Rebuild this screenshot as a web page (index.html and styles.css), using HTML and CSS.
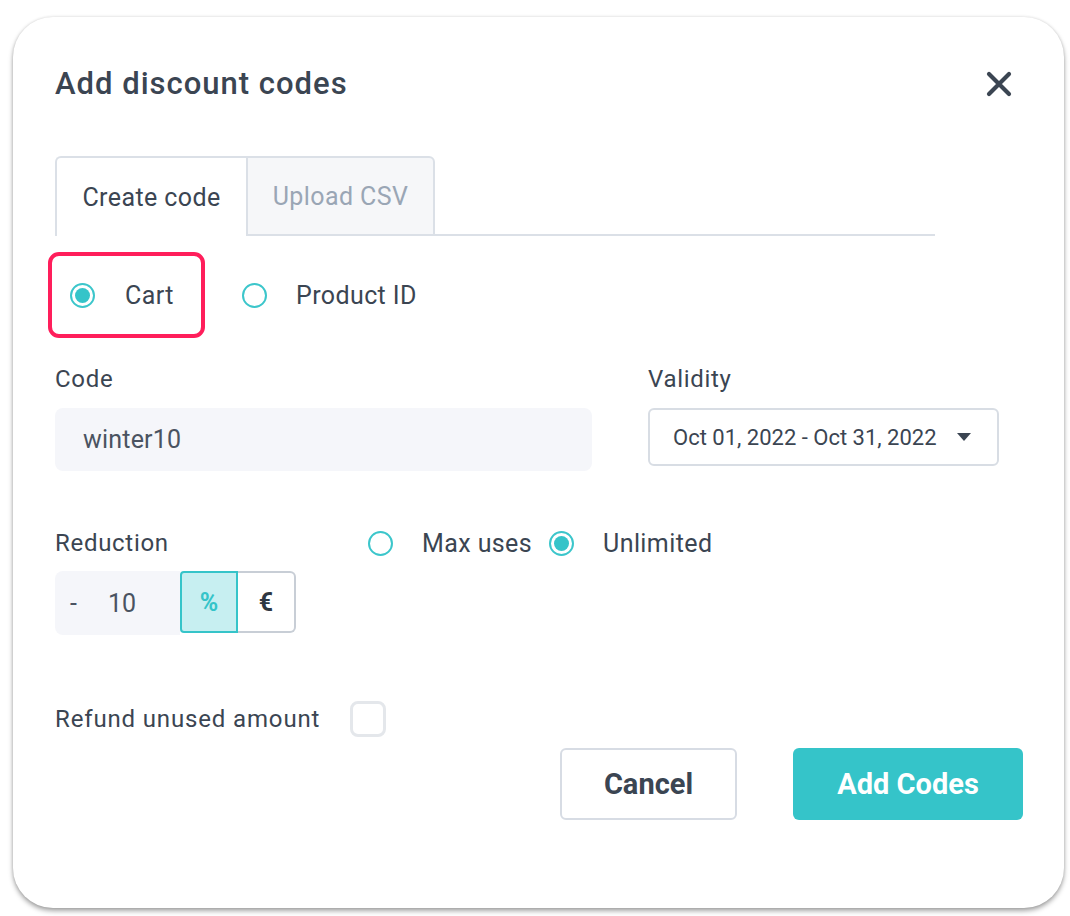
FILE: index.html
```html
<!DOCTYPE html>
<html>
<head>
<meta charset="utf-8">
<link rel="stylesheet" href="styles.css">
</head>
<body>
<div class="card">
  <div class="header">
    <h1 class="title">Add discount codes</h1>
    <svg class="close" width="26" height="26" viewBox="0 0 26 26"><path d="M3 3 L23 23 M23 3 L3 23" stroke="#3b4552" stroke-width="4.2" stroke-linecap="round"/></svg>
  </div>
  <div class="tabs">
    <div class="tab active">Create code</div>
    <div class="tab inactive">Upload CSV</div>
    <div class="tab-rest"></div>
  </div>
  <div class="type-row">
    <label class="radio highlight"><span class="dot on"></span><span>Cart</span></label>
    <label class="radio"><span class="dot"></span><span>Product ID</span></label>
  </div>
  <div class="fields">
    <div class="field">
      <div class="label">Code</div>
      <div class="input code-input">winter10</div>
    </div>
    <div class="field">
      <div class="label">Validity</div>
      <div class="select"><span>Oct 01, 2022 - Oct 31, 2022</span><svg width="14" height="8" viewBox="0 0 14 8"><path d="M0 0 H14 L7 8 Z" fill="#3b4552"/></svg></div>
    </div>
  </div>
  <div class="reduction-row">
    <div class="label red-label">Reduction</div>
    <label class="radio small"><span class="dot"></span><span>Max uses</span></label>
    <label class="radio small"><span class="dot on"></span><span>Unlimited</span></label>
  </div>
  <div class="amount">
    <div class="amount-input"><span class="minus">-</span><span>10</span></div>
    <div class="unit unit-on">%</div>
    <div class="unit unit-off">€</div>
  </div>
  <div class="refund-row">
    <span>Refund unused amount</span>
    <span class="checkbox"></span>
  </div>
  <div class="actions">
    <button class="btn cancel">Cancel</button>
    <button class="btn primary">Add Codes</button>
  </div>
</div>
</body>
</html>
```
FILE: styles.css
```css
* { box-sizing: border-box; }
html, body { margin: 0; padding: 0; background: #ffffff; }
body {
  font-family: Roboto, "Liberation Sans", sans-serif;
  color: #3b4552;
  width: 1070px;
  height: 916px;
  overflow: hidden;
}
.card {
  margin: 17px 0 0 13px;
  width: 1051px;
  height: 891px;
  background: #fff;
  border-radius: 40px;
  box-shadow: 0 3px 5px rgba(0,0,0,0.35), 0 0 3px rgba(0,0,0,0.12);
  padding: 50px 41px 0 42px;
}
.header {
  display: flex;
  align-items: center;
  justify-content: space-between;
  height: 34px;
  padding-right: 11px;
}
.title {
  margin: 0;
  font-size: 31px;
  font-weight: 500;
  line-height: 34px;
  color: #3b4552;
  letter-spacing: 1px;
}
.close { display: block; }
.tabs {
  display: flex;
  margin-top: 55px;
  height: 80px;
  width: 880px;
}
.tab {
  display: flex;
  align-items: center;
  justify-content: center;
  font-size: 25px;
  letter-spacing: 0.4px;
  border: 2px solid #dbe0e7;
}
.tab.active {
  width: 191px;
  border-bottom: none;
  border-right: none;
  border-radius: 6px 0 0 0;
  color: #3b4552;
  background: #fff;
}
.tab.inactive {
  width: 189px;
  background: #f6f7f9;
  color: #9aa6b5;
  border-radius: 0 6px 0 0;
}
.tab-rest {
  flex: 1;
  border-bottom: 2px solid #dbe0e7;
}
.type-row {
  display: flex;
  align-items: center;
  margin-top: 16px;
  margin-left: -7px;
  gap: 37px;
}
.radio {
  display: flex;
  align-items: center;
  gap: 29px;
  font-size: 25px;
  letter-spacing: 0.4px;
  color: #3b4552;
}
.radio.highlight {
  border: 4px solid #ff1e5b;
  border-radius: 11px;
  height: 86px;
  width: 157px;
  padding: 0 0 0 18px;
  gap: 30px;
}
.dot {
  width: 25px;
  height: 25px;
  border-radius: 50%;
  border: 2px solid #3cc6cb;
  display: flex;
  align-items: center;
  justify-content: center;
  flex: none;
}
.dot.on::after {
  content: "";
  width: 15px;
  height: 15px;
  border-radius: 50%;
  background: #35c4c9;
}
.fields {
  display: flex;
  gap: 56px;
  margin-top: 27px;
}
.field { display: flex; flex-direction: column; }
.field:first-child { width: 537px; }
.field:last-child { width: 351px; }
.label {
  font-size: 24px;
  letter-spacing: 0.7px;
  line-height: 28px;
  color: #3b4552;
}
.input {
  margin-top: 15px;
  height: 63px;
  background: #f5f6fa;
  border-radius: 8px;
  display: flex;
  align-items: center;
  padding-left: 28px;
  font-size: 25px;
  letter-spacing: 0.2px;
  color: #4a5361;
}
.select {
  margin-top: 15px;
  height: 58px;
  border: 2px solid #d8dde4;
  border-radius: 6px;
  display: flex;
  align-items: center;
  justify-content: space-between;
  padding: 0 26px 0 23px;
  font-size: 22px;
  color: #3b4552;
}
.reduction-row {
  display: flex;
  align-items: center;
  margin-top: 58px;
  height: 28px;
}
.red-label { width: 313px; }
.radio.small { gap: 29px; }
.radio.small:nth-child(2) { margin-right: 17px; }
.amount {
  display: flex;
  margin-top: 14px;
  height: 64px;
}
.amount-input {
  width: 125px;
  background: #f5f6fa;
  border-radius: 8px 0 0 8px;
  display: flex;
  align-items: center;
  font-size: 25px;
  color: #4a5361;
  padding-left: 15px;
  gap: 31px;
}
.unit {
  width: 58px;
  height: 62px;
  display: flex;
  align-items: center;
  justify-content: center;
  font-size: 25px;
  font-weight: 700;
}
.unit-on {
  background: #c7eff1;
  border: 2px solid #35c4c9;
  color: #35c4c9;
  border-radius: 4px 0 0 4px;
}
.unit-off {
  border: 2px solid #c8ced6;
  border-left: none;
  border-radius: 0 6px 6px 0;
  color: #2e3742;
}
.refund-row {
  display: flex;
  align-items: center;
  gap: 30px;
  margin-top: 66px;
  font-size: 24px;
  letter-spacing: 0.85px;
  color: #3b4552;
  height: 36px;
}
.checkbox {
  width: 36px;
  height: 36px;
  border: 3px solid #e4e7eb;
  border-radius: 8px;
}
.actions {
  display: flex;
  justify-content: flex-end;
  gap: 56px;
  margin-top: 11px;
}
.btn {
  height: 72px;
  font-family: Roboto, "Liberation Sans", sans-serif;
  font-size: 29px;
  font-weight: 700;
  border-radius: 6px;
  cursor: pointer;
}
.btn.cancel {
  width: 177px;
  background: #fff;
  border: 2px solid #d7dce4;
  color: #3b4552;
}
.btn.primary {
  width: 230px;
  background: #35c4c9;
  border: none;
  color: #fff;
}
```
